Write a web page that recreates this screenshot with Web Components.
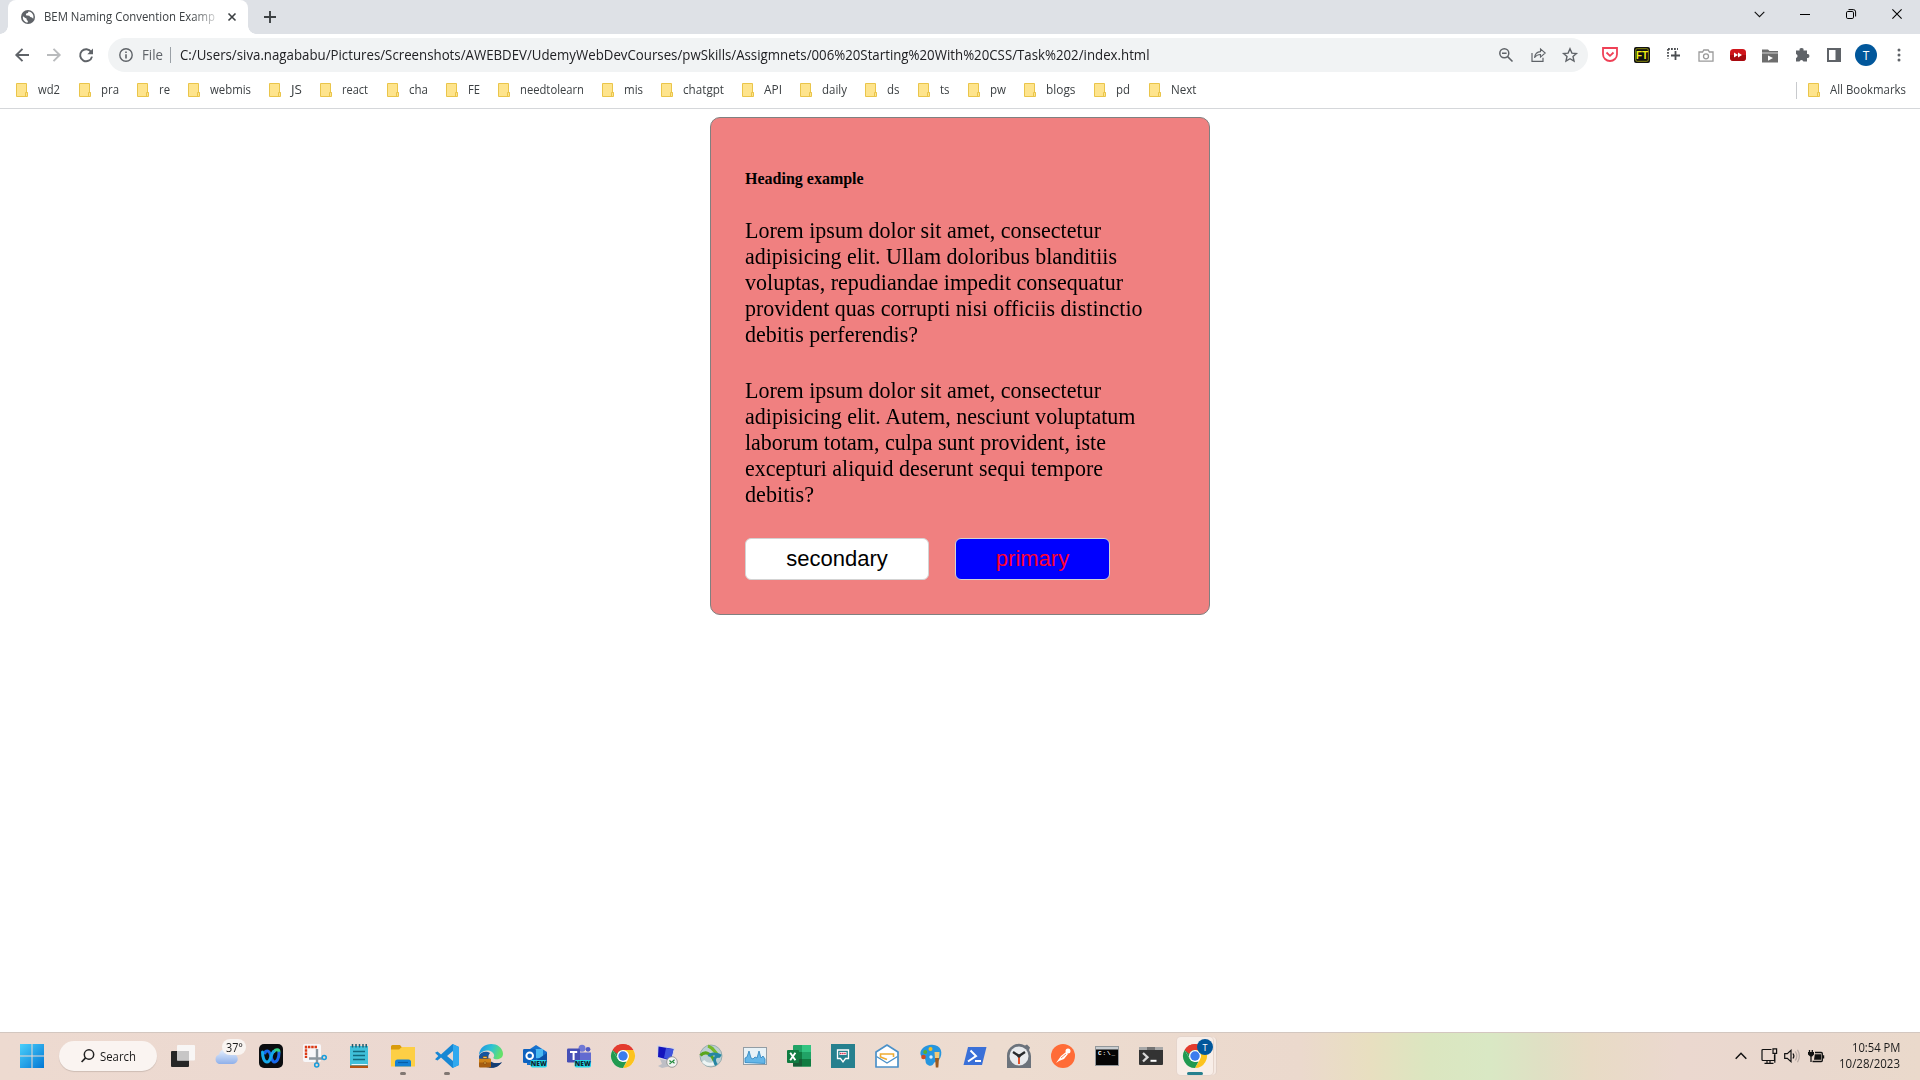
<!DOCTYPE html>
<html lang="en">
<head>
<meta charset="utf-8">
<title>BEM Naming Convention Example</title>
<style>
html,body{margin:0;height:100%;background:#fff;overflow:hidden}
body{font-family:"Open Sans","Noto Sans",sans-serif}
desktop-screen{height:1080px}
</style>
</head>
<body>
<desktop-screen>
  <browser-tabs slot="chrome"></browser-tabs>
  <browser-toolbar slot="chrome"></browser-toolbar>
  <bookmark-bar slot="chrome"></bookmark-bar>
  <bem-card slot="page">
    <span slot="heading">Heading example</span>
    <text-fit w="356">Lorem ipsum dolor sit amet, consectetur</text-fit>
    <text-fit w="372">adipisicing elit. Ullam doloribus blanditiis</text-fit>
    <text-fit w="378">voluptas, repudiandae impedit consequatur</text-fit>
    <text-fit w="397.5">provident quas corrupti nisi officiis distinctio</text-fit>
    <text-fit w="173">debitis perferendis?</text-fit>
    <text-fit slot="second" w="356">Lorem ipsum dolor sit amet, consectetur</text-fit>
    <text-fit slot="second" w="390.5">adipisicing elit. Autem, nesciunt voluptatum</text-fit>
    <text-fit slot="second" w="361">laborum totam, culpa sunt provident, iste</text-fit>
    <text-fit slot="second" w="358">excepturi aliquid deserunt sequi tempore</text-fit>
    <text-fit slot="second" w="69">debitis?</text-fit>
    <bem-button slot="actions" style="width:184px">secondary</bem-button>
    <bem-button slot="actions" kind="primary" style="width:155px">primary</bem-button>
  </bem-card>
  <task-bar slot="taskbar"></task-bar>
</desktop-screen>
<script>
const chromeLogo = `<circle cx="12" cy="12" r="12" fill="#fff"/><path d="M12 12 1.6 6A12 12 0 0 1 22.4 6z" fill="#e33b2e"/><path d="M12 12V6h10.4A12 12 0 0 1 12 24l5.2-9z" fill="#fcc31e"/><path d="M1.6 6l5.2 9L12 18l3.5-.4L12 24A12 12 0 0 1 1.6 6z" fill="#219a50"/><path d="M1.6 6 7 15 12 6z" fill="#219a50"/><path d="M1.6 6A12 12 0 0 1 22.4 6H12a6 6 0 0 0-5.7 4z" fill="#e33b2e"/><circle cx="12" cy="12" r="6" fill="#fff"/><circle cx="12" cy="12" r="4.7" fill="#3b7ded"/>`;
const S = (d, w = 2, c = '#5f6368') => `<path d="${d}" fill="none" stroke="${c}" stroke-width="${w}"/>`;
const newTag = `<rect x="7.5" y="16" width="16.5" height="7.5" rx="2" fill="#25d8e8"/><text x="15.8" y="22.2" font-size="6.6" font-weight="800" text-anchor="middle" fill="#102530">NEW</text>`;
const ICONS = {
  globe: `<circle cx="7" cy="7" r="7" fill="#5f6368"/><path d="M2 6.2 4.3 8l1.2.4.3 1.5 1.1 1.2-.2 1.5C3.500 12.300 1.300 9.500 2 6.200zM7.500 1.600l-.6 1.300-1.700.7-.4 1.600 1.500.4 2 .1 1 1.400 1.700.3 1.200 1.300C13.300 5.300 11 2 7.500 1.600z" fill="#fff"/>`,
  close: S('M1.500 1.500l7 7M8.500 1.500l-7 7', 1.6, '#3c4043'),
  plus: S('M6 0v12M0 6h12', 1.9, '#3c4043'),
  chevDown: S('M.7.8 5.500 5.600 10.300.8', 1.1, '#111'),
  min: S('M0 .5h10', 1, '#000'),
  restore: `<rect x=".5" y="2.500" width="7" height="7" rx="1.300" fill="none" stroke="#000"/>${S('M2.500 .6H7.300a2.300 2.300 0 0 1 2.300 2.300V7.500', 1, '#000')}`,
  winClose: S('M.4.4l9.200 9.200M9.600.4.4 9.600', 1.1, '#000'),
  back: S('M14 7H1.500M7.500.8 1.300 7l6.200 6.200', 1.9),
  fwd: S('M0 7h12.500M6.500.8 12.700 7l-6.200 6.200', 1.9, '#b9bbbd'),
  reload: S('M12.200 4A6 6 0 1 0 13 8.600', 1.9) + `<path d="M14 .4v5.800H8.300z" fill="#5f6368"/>`,
  info: `<circle cx="7" cy="7" r="6.200" fill="none" stroke="#5f6368" stroke-width="1.400"/><path d="M6.200 3.500h1.600v1.600H6.200zM6.200 6.200h1.600v4.300H6.200z" fill="#5f6368"/>`,
  zoomOut: `<circle cx="5.300" cy="5.300" r="4.500" fill="none" stroke="#5f6368" stroke-width="1.500"/>${S('M3 5.300h4.600M8.600 8.600l4.900 4.900', 1.500)}`,
  share: S('M1 5v8.300h11V9.700', 1.200) + S('M3.500 9.800C4 6 6 3.800 9.500 3.600V.9L14.200 5 9.500 9.100V6.500C6.700 6.500 4.900 7.600 3.500 9.800z', 1.100),
  star: S('M7 .8l1.900 4.300 4.500.4-3.400 3 1 4.500L7 10.700 3 13l1-4.500-3.400-3 4.500-.4z', 1.400),
  pocket: S('M1 1h14v6.200a7 6.800 0 0 1-14 0z', 1.800, '#ef4056') + S('M4.500 5.500 8 8.800l3.500-3.300', 1.800, '#ef4056'),
  ft: `<rect width="16" height="16" rx="2" fill="#111"/><rect x="1.700" y="1.700" width="12.600" height="12.600" rx="1.500" fill="none" stroke="#99980e" stroke-width=".9"/><text x="8" y="12" font-weight="bold" font-size="10.500" textLength="12" lengthAdjust="spacingAndGlyphs" text-anchor="middle" fill="#f4f210">FT</text>`,
  capture: `<path d="M1 1h10M1 1v9.500" stroke="#4a4d51" stroke-width="1.800" stroke-dasharray="1.800 1.200" fill="none"/>${S('M8.500 3v9M4 7.500h9', 1.800, '#4a4d51')}`,
  camera: S('M1 3h3.600l1.200-2h4.400l1.200 2H15v9.200H1z', 1.300, '#9a9a9a') + `<circle cx="8" cy="7.300" r="2.500" fill="none" stroke="#9a9a9a" stroke-width="1.300"/>`,
  yt: `<rect y="2" width="16" height="12" rx="3.500" fill="#d0161c"/><path d="M0 8h16v2.500a3.500 3.500 0 0 1-3.500 3.500h-9A3.500 3.500 0 0 1 0 10.500z" fill="#a70b10"/><path d="M4 5.500l4 2.500-4 2.500zM8 5.500l4 2.500-4 2.500z" fill="#fff"/>`,
  folderPlay: `<path d="M0 1.500h6l1.500 1.500H16V5H0z" fill="#6d6d6d"/><path d="M0 4h16v2H0z" fill="#a0a0a0"/><path d="M0 6h16v8.500H0z" fill="#6d6d6d"/><path d="M6 7.500l5 2.600-5 2.600z" fill="#fff"/>`,
  puzzle: `<path d="M1 3.500h3.600a2 2 0 1 1 3.900 0H12v3.600a2 2 0 1 1 0 3.900v3.500H8.400a2 2 0 0 0-3.900 0H1v-3.600a2 2 0 0 0 0-3.900z" fill="#5f6368"/>`,
  side: `<path d="M0 0h14v14H0zM2 2v10h6.500V2z" fill="#5f6368" fill-rule="evenodd"/>`,
  dots: `<g fill="#5f6368"><circle cx="2" cy="2" r="1.500"/><circle cx="2" cy="7" r="1.500"/><circle cx="2" cy="12" r="1.500"/></g>`,
  folder: `<path d="M.5.500H10.500V9.500h1v4H.5z" fill="#fee48d" stroke="#eac54a"/><path d="M9.500 13.500v-4h2" fill="none" stroke="#eac54a"/>`,
  win: `<defs><linearGradient id="a" gradientUnits="userSpaceOnUse" x1="0" y1="0" x2="24" y2="24"><stop stop-color="#4bd0fb"/><stop offset="1" stop-color="#0277d4"/></linearGradient></defs><path d="M0 0h11.500v11.500H0zM12.500 0H24v11.500H12.500zM0 12.500h11.500V24H0zM12.500 12.500H24V24H12.500z" fill="url(#a)"/>`,
  search: `<circle cx="8" cy="5.500" r="4.700" fill="none" stroke="#222" stroke-width="1.500"/>${S('M4.600 8.800.6 13', 1.700, '#222')}`,
  taskview: `<rect y="7" width="18" height="16" rx="1" fill="#262626"/><rect x="6" y="1" width="18" height="15.500" rx="1" fill="#f8f6f5"/><rect x="6" y="7" width="12" height="9.500" fill="#c7c6c6"/>`,
  cloud: `<defs><linearGradient id="a" x2="0" y2="1"><stop stop-color="#e8f0fc"/><stop offset="1" stop-color="#8fb0ea"/></linearGradient></defs><path d="M5 20a5 5 0 0 1 0-9.500A7 7 0 0 1 18.500 10 5 5 0 0 1 19 20z" fill="url(#a)"/>`,
  webex: `<rect width="24" height="24" rx="5" fill="#0b0d10"/><g fill="none" stroke-width="3" stroke-linecap="round"><path d="M15 7.500c2-2.500 5-2.200 5 .5" stroke="#35cf86"/><path d="M20 9c0 5-2 9-4.500 9-4 0-3-11-7-11-1.500 0-2.500 1-2.500 2" stroke="#1668ec"/><path d="M3.500 8c0 5 1.500 10 4.500 10 4 0 3.500-7.500 6.500-10.500" stroke="#15a9ea"/></g>`,
  snip: `<rect width="18" height="18" rx="2" fill="#f7f7f9"/><path d="M14 3H3v11" fill="none" stroke="#dc3b16" stroke-width="2.400" stroke-dasharray="2.500 .8"/><path d="M14 5v14M6 14.500h13" stroke="#8c979f" stroke-width="2.400"/><circle cx="13.700" cy="21" r="2" fill="none" stroke="#189ddc" stroke-width="1.600"/><circle cx="21.200" cy="13.500" r="2" fill="none" stroke="#189ddc" stroke-width="1.600"/>`,
  notepad: `<path d="M3 2h18v20H3z" fill="#40c0da"/><path d="M3 21.500h18V24H3z" fill="#b65513"/><path d="M4.500 20.500h16" stroke="#e9f7fa"/><path d="M5.500 0v3.500M9 0v3.500M12.500 0v3.500M16 0v3.500M19.200 0v3.500" stroke="#205d70" stroke-width="1.500"/><path d="M6 7.500h12M6 11.500h12M6 15.500h12" stroke="#12697e" stroke-width="1.500"/>`,
  explorer: `<path d="M0 2.500Q0 1 1.500 1H9l2 2.500h11q2 0 2 1.500v6H0z" fill="#d99b0c"/><path d="M0 5.500h8l3-2.500h13v19.500H0z" fill="#fdcf45"/><path d="M4 22.500V18q0-2.500 2.500-2.500h11Q20 15.500 20 18v4.500z" fill="#1381d5"/><path d="M7 18.500h10" stroke="#075da6" stroke-width="1.200"/>`,
  vscode: `<path d="M17.500 0 24 3v18l-6.500 3L6 13.500 2.500 16.500 0 15.200 3.300 12 0 8.800 2.500 7.500 6 10.500zM18 7l-6 5 6 5z" fill="#1787d4" fill-rule="evenodd"/><path d="M18 .2 24 3v18l-6 2.800z" fill="#30a9ef"/>`,
  edge: `<defs><linearGradient id="a" x2="1" y2=".3"><stop stop-color="#1d8de4"/><stop offset=".55" stop-color="#2fc3d3"/><stop offset="1" stop-color="#64e06a"/></linearGradient></defs><path d="M0 12c2-5 8-5 11-3-3 3-2 9 4 10h7c-4 5-12 6-17 3-4-2-5-6-5-10z" fill="#16549e"/><path d="M10 13c0 6 8 8 13 5-3 5-8 6.500-13 5.500z" fill="#123c72"/><path d="M0 11C.5-3.500 23-3.500 24 9.500c.2 6-7.500 7-9.500 4.800-.6-1 1-1.300.6-3.300C14.500 8 11 6.200 7.500 6.500 4 7 1.500 8.500 0 11z" fill="url(#a)"/><rect y="14.500" width="12" height="9" rx="1" fill="#a65d10"/><path d="M0 15h12v3.500H0z" fill="#cf8318"/><path d="M4 14v-1.500h4V14M5 18h2v2H5z" fill="#f3c252" stroke="#7d430b" stroke-width=".6"/>`,
  outlook: `<path d="M4 7 13 1l11 7v13H4z" fill="#1672cf"/><path d="M7 5h13v9H7z" fill="#48b8f2"/><path d="M6 21 24 9v12z" fill="#0c50a5"/><rect y="5" width="13" height="14" rx="1.300" fill="#0e62bf"/><circle cx="6.700" cy="11.800" r="3.300" fill="none" stroke="#fff" stroke-width="2"/>${newTag}`,
  teams: `<circle cx="15" cy="4.200" r="3.500" fill="#7078d5"/><circle cx="21" cy="5.300" r="2.400" fill="#505ac5"/><path d="M11 8.500h13v8q-2 4-6 4h-7z" fill="#626bd0"/><rect y="4.500" width="13" height="14" rx="1.300" fill="#464fb6"/><path d="M3 8h7.200M6.600 8v8" stroke="#fff" stroke-width="2"/>${newTag}`,
  chrome: chromeLogo,
  rdp: `<path d="M5 15l8 1-1 5 4 1-9 2-4-2 4-2z" fill="#bdbec5"/><path d="M2 1l18 3-3 14-15-4z" fill="#d6d7e2"/><path d="M3.500 2.500 18.500 5l-2.800 11.500L3 13z" fill="#1414bd"/><path d="M11 4l7.500 1.200-2.800 11L9 14z" fill="#3f54de"/><circle cx="17" cy="18" r="5.300" fill="#f1f2f0" stroke="#8a8a8a" stroke-width=".8"/><path d="M14.500 16.500l2 1.800-2 1.700M19.500 15.800l-2 1.800 2 1.700" fill="none" stroke="#218b3c" stroke-width="1.200"/>`,
  anyconnect: `<circle cx="12" cy="12" r="11" fill="#bccfd3" stroke="#8da2a3" stroke-width=".8"/><path d="M4 17c3 3.500 7 4 11 2.500" fill="none" stroke="#eef5f4" stroke-width="3"/><path d="M1.500 11.500C6 6.500 12 9 15 16.500" fill="none" stroke="#58a51c" stroke-width="3"/><path d="M9 2c5 1.500 6 5 9 8" fill="none" stroke="#75b82a" stroke-width="3"/><path d="M22 12c-6-3.500-11-2-12 .5M21 12.500c-5-1.500-7.500 3-3.500 8.500" fill="none" stroke="#2586a2" stroke-width="3"/>`,
  perf: `<rect x=".5" y="3.500" width="23" height="17" fill="#e8f2f7" stroke="#929da5"/><path d="M2 18.500V14l2-1 2-6 2 7 2 1 2-2 2 1 2-7 2 7 2-2 2 3v4.500z" fill="#64b6e8" stroke="#2d83bd" stroke-width=".8"/>`,
  excel: `<rect x="6" y="1" width="18" height="21.500" rx="1" fill="#21a366"/><path d="M15 1h9v7h-9z" fill="#33c481"/><path d="M6 8h9v7H6zM15 15h9v7.500h-9z" fill="#107c41"/><path d="M6 15h9v7.500H6z" fill="#185c37"/><rect y="6" width="12" height="13" rx="1" fill="#107c41"/>${S('M3.200 8.700l5.200 7.600M8.400 8.700l-5.200 7.600', 1.900, '#fff')}`,
  chat: `<rect width="24" height="24" fill="#26808e"/><path d="M6.500 6h11v8.500h-3L12 18l-2.500-3.500h-3z" fill="none" stroke="#fff" stroke-width="1.300"/><path d="M8.500 8h7v3h-7z" fill="#fff"/><path d="M9 9.500h6" stroke="#d52e4f" stroke-width="1.600" stroke-dasharray="1.500 .6"/>`,
  mail: `<path d="M1 8 12 1l11 7v15H1z" fill="#fff" stroke="#4b91c9" stroke-width="1.700" stroke-linejoin="round"/><path d="M1.500 12.500 12 19l10.500-6.500" fill="none" stroke="#4b91c9" stroke-width="1.300"/><path d="M12 15.500 5.500 13V10h13v3" fill="none" stroke="#eeac32" stroke-width="1.600"/>`,
  paint: `<path d="M12 .8C22 0 25 9 20 16c-2 2-4 1-5 3s-3 4-6 2c-4-2-1-5-4-7C-2 11 2 1.500 12 .800z" fill="#2696df"/><circle cx="11.500" cy="5" r="2" fill="#f4bf22"/><circle cx="6.200" cy="8" r="2" fill="#5aae2e"/><circle cx="4.500" cy="13" r="2.300" fill="#d04a20"/><circle cx="12" cy="13" r="1.700" fill="#dceef9"/><path d="M15.500 8h5l-.5 7h-4z" fill="#f0c878"/><path d="M16 14h4l-.7 9.500h-2.500z" fill="#9c5b20"/>`,
  powershell: `<path d="M5 3h18.500L19 21H.5z" fill="#3a70d8"/>${S('M7.500 6.500l5.500 5.500-8 5.500M12 17h6', 2, '#fff')}`,
  clock: `<path d="M0 12A12 12 0 0 1 18 1.500l2-1 3 3-1 2.500A12 12 0 0 1 24 12v12H0z" fill="#6c737c"/><circle cx="12" cy="12" r="9.500" fill="#e8eaed"/>${S('M6 8l6 4 6-4', 2.300, '#27292c')}<path d="M12 12v8" stroke="#e6532b" stroke-width="2"/><circle cx="12" cy="12" r="1.700" fill="#27292c"/>`,
  postman: `<circle cx="12" cy="12" r="12" fill="#ff6c37"/><path d="M5 19l5-7 5-4 2 2-4 5-5 2z" fill="#fff"/><circle cx="17" cy="7" r="2.500" fill="#fff"/><path d="M10 14l5-4" stroke="#ff6c37" stroke-width=".8"/>`,
  cmd: `<rect x=".5" y="2.500" width="23" height="19" fill="#050505" stroke="#92979a"/><path d="M1 3h22v2.500H1z" fill="#c9cdd0"/><text x="3" y="11.200" font-weight="bold" font-size="6" fill="#fff" textLength="17">C:\\_</text>`,
  terminal: `<rect y="3" width="24" height="18" rx="1" fill="#333"/><path d="M0 3h24v3H0z" fill="#a8a8a8"/><path d="M8 3h8v3H8z" fill="#737373"/>${S('M4 9l4.500 4.200L4 17.500', 2.300, '#d9d9d9')}${S('M11.500 16.800h6', 2, '#fff')}`,
  chevUp: S('M.7 6.800 6 1.300l5.300 5.500', 1.500, '#111'),
  network: S('M10.500 1.500H2q-1 0-1 1v9q0 1 1 1h11.500V7M6 12.500V15M9 12.500V15M3.500 15.300h9', 1.200, '#111') + S('M12 .800h3.600v4.500H12zM13.800 5.300v9.500', 1.200, '#111'),
  volume: S('M.7 4.700h2.600L7 1.300v11.400L3.300 9.300H.7z', 1.200, '#111') + S('M9 4.500q1.800 2.500 0 5', 1.200, '#111') + S('M11.300 2.500q3 4.500 0 9M13.500.800q3.700 6.200 0 12.400', 1.200, '#b7aaa4'),
  battery: `<path d="M6.800 4.200h6.400v5.600H6zM14.500 5.200h1.700v3.400h-1.700zM0 2h6v2.500L4.200 6.500h-2L0 4.500z" fill="#111"/>${S('M7 2.500h6.300q1 0 1 1v7q0 1-1 1H4.500M1.500 0v2.500M4.300 0v2.500M3 6v6', 1.300, '#111')}`
};
function define(name, markup, after) {
  const t = document.createElement('template');
  t.innerHTML = markup;
  customElements.define(name, class extends HTMLElement {
    connectedCallback() {
      if (this.shadowRoot) return;
      const r = this.attachShadow({ mode: 'open' });
      r.append(t.content.cloneNode(true));
      if (after) after(this, r);
    }
  });
}
define('ui-icon', `<style>:host{display:block;flex:none}svg{display:block;overflow:visible;width:100%;height:100%}text{font-family:"Open Sans",sans-serif}:host([name=ft]) text{font-family:"Liberation Sans"}:host([name=cmd]) text{font-family:"Liberation Mono"}</style><svg></svg>`, (el, r) => {
  const w = el.getAttribute('w') || 24, h = el.getAttribute('h') || w;
  el.style.width = w + 'px'; el.style.height = h + 'px';
  const s = r.querySelector('svg');
  s.setAttribute('viewBox', `0 0 ${w} ${h}`);
  s.innerHTML = ICONS[el.getAttribute('name')];
});
define('desktop-screen', `<style>:host{display:flex;flex-direction:column;background:#fff}main{flex:1;padding-top:8px}</style><header><slot name="chrome"></slot></header><main><slot name="page"></slot></main><slot name="taskbar"></slot>`);
define('browser-tabs', `<style>
:host{display:flex;height:34px;background:#dee1e6;box-sizing:border-box;padding-left:8px}
.tab{width:240px;box-sizing:border-box;background:#fff;border-radius:8px 8px 0 0;display:flex;align-items:center;padding:0 11px 0 13px;position:relative}
.tab::before,.tab::after{content:"";position:absolute;bottom:0;width:8px;height:8px}
.tab::before{left:-8px;background:radial-gradient(circle at 0 0,#dee1e6 7.5px,#fff 8px)}
.tab::after{right:-8px;background:radial-gradient(circle at 100% 0,#dee1e6 7.5px,#fff 8px)}
.title{width:172px;margin:-1px 12px 1px 9px;font-size:12px;color:#3c4043;-webkit-mask:linear-gradient(90deg,#000 148px,#0003 172px)}
.plus{margin:11px 0 0 16px}.ctl{margin-left:auto;display:flex;align-items:center;height:28px;padding-right:18px}
</style><div class="tab"><ui-icon name="globe" w="14"></ui-icon><div class="title"><text-fit w="171">BEM Naming Convention Examp</text-fit></div><ui-icon name="close" w="10"></ui-icon></div><ui-icon class="plus" name="plus" w="12"></ui-icon>
<div class="ctl"><ui-icon name="chevDown" w="11" h="6"></ui-icon><ui-icon name="min" w="10" h="1" style="margin-left:35px"></ui-icon><ui-icon name="restore" w="10" style="margin-left:36px"></ui-icon><ui-icon name="winClose" w="10" style="margin-left:36px"></ui-icon></div>`);
define('browser-toolbar', `<style>
:host{display:flex;align-items:center;height:42px;box-sizing:border-box;padding:0 19px 0 15px;font-size:14px}
.box{width:1480px;height:34px;border-radius:17px;background:#f1f3f4;box-sizing:border-box;display:flex;align-items:center;padding:0 11px 0 11px;margin-left:15px}
.file{color:#5f6368;margin-left:9px}.sep{width:1px;height:16px;background:#9aa0a6;margin:0 9px 0 7px}.url{color:#202124}.file,.url{margin-top:-1px}
.av{width:22px;height:22px;border-radius:50%;background:#01579b;color:#fff;font-size:12px;display:flex;align-items:center;justify-content:center;margin:0 20px 0 14px}
.ext{display:flex;align-items:center;gap:16px;margin-left:14px}
</style><ui-icon name="back" w="14"></ui-icon><ui-icon name="fwd" w="14" style="margin-left:18px"></ui-icon><ui-icon name="reload" w="14" style="margin-left:18px"></ui-icon>
<div class="box"><ui-icon name="info" w="14"></ui-icon><text-fit class="file" w="21">File</text-fit><i class="sep"></i><text-fit class="url" w="969.500">C:/Users/siva.nagababu/Pictures/Screenshots/AWEBDEV/UdemyWebDevCourses/pwSkills/Assigmnets/006%20Starting%20With%20CSS/Task%202/index.html</text-fit>
<ui-icon name="zoomOut" w="14" style="margin-left:auto"></ui-icon><ui-icon name="share" w="15" h="14" style="margin-left:18px"></ui-icon><ui-icon name="star" w="14" style="margin-left:17px"></ui-icon></div>
<div class="ext"><ui-icon name="pocket" w="16"></ui-icon><ui-icon name="ft" w="16"></ui-icon><ui-icon name="capture" w="16" style="position:relative;left:1px;top:1px"></ui-icon><ui-icon name="camera" w="16" h="13"></ui-icon><ui-icon name="yt" w="16"></ui-icon><ui-icon name="folderPlay" w="16" h="15"></ui-icon><ui-icon name="puzzle" w="16" style="position:relative;left:1px"></ui-icon><ui-icon name="side" w="14" style="margin-left:1px"></ui-icon></div><div class="av">T</div><ui-icon name="dots" w="4" h="14"></ui-icon>`);
define('bookmark-bar', `<style>
:host{display:flex;align-items:center;height:33px;box-sizing:border-box;border-bottom:1px solid #d5d7da;padding:0 14px 4px 16px;font-size:12px;color:#3c4043}
.b{display:flex;align-items:center;gap:10px;height:17px}.all{margin-left:auto;border-left:1px solid #c8cacd;padding-left:11px}text-fit{margin-top:-1px}
</style>`, (el, r) => {
  const a = [['wd2',16,22],['pra',79,18],['re',137,11],['webmis',188,41],['JS',269,11],['react',320,26],['cha',387,19],['FE',446,12],['needtolearn',498,64],['mis',602,19],['chatgpt',661,41],['API',742,18],['daily',800,25],['ds',865,12.5],['ts',918,9.5],['pw',968,16],['blogs',1024,29.5],['pd',1094,14],['Next',1149,25.5]];
  a.forEach(([t, x, w], i) => {
    const d = document.createElement('div'); d.className = 'b';
    if (a[i + 1]) d.style.width = a[i + 1][1] - x + 'px';
    d.innerHTML = `<ui-icon name="folder" w="12" h="14"></ui-icon><text-fit w="${w}">${t}</text-fit>`;
    r.append(d);
  });
  const d = document.createElement('div'); d.className = 'b all';
  d.innerHTML = '<ui-icon name="folder" w="12" h="14"></ui-icon><text-fit w="76">All Bookmarks</text-fit>';
  r.append(d);
});
define('bem-card', `<style>
:host{display:block;width:500px;height:498px;box-sizing:border-box;margin:0 auto;border:1px solid gray;border-radius:10px;background:#f08080;padding:50px 34px 0;font-family:"Liberation Serif",serif;color:#000}
h5{margin:0;font-size:16px;line-height:22px}p{margin:0;font-size:22.400px;line-height:26px}
.one{margin-top:28px}.two{margin-top:30px}.act{display:flex;gap:26px;margin-top:30px}
</style><h5><slot name="heading"></slot></h5><p class="one"><slot></slot></p><p class="two"><slot name="second"></slot></p><div class="act"><slot name="actions"></slot></div>`);
define('bem-button', `<style>
:host{display:flex;align-items:center;justify-content:center;height:42px;box-sizing:border-box;border:1px solid #d3d3d3;border-radius:6px;background:#fff;color:#000;font:22px "Liberation Sans",sans-serif}
:host([kind=primary]){background:#00f;color:#ff0030}
span{line-height:25px;margin-top:-1px}</style><span><slot></slot></span>`);
define('task-bar', `<style>
:host{display:flex;align-items:center;height:48px;box-sizing:border-box;border-top:1px solid #d3c7c0;padding:0 20px 0 20px;color:#1b1b1b;font-size:12px;
background:linear-gradient(90deg,#eddad0 0,#ebd8d1 500px,#eddcd0 1000px,#ebd9cd 1300px,#e8dfc0 1370px,#dbe6c0 1430px,#d9e8c4 1490px,#dfe0c4 1540px,#e8dbc5 1590px,#ebd8cf 1680px,#e9d8ce 1800px,#ead9cb 1920px)}
.pill{width:98px;height:30px;border-radius:15px;background:#faf4f1;display:flex;align-items:center;gap:5px;box-sizing:border-box;padding-left:22px;margin:-1px 14px 0 15px;box-shadow:0 1px 1px #0002}
.apps{display:flex;align-items:center;height:47px}.app{width:44px;height:46px;margin-bottom:1px;display:flex;align-items:center;justify-content:center;position:relative}
.dot::after{content:"";position:absolute;bottom:4px;width:6px;height:3px;border-radius:2px;background:#817772}
.deg{position:absolute;left:17px;top:6px;width:24px;height:16px;border-radius:8px;background:#f9f4f1;display:flex;align-items:center;justify-content:center}
.on{width:36px;height:38px;border-radius:4px;background:#f8eee8;box-shadow:0 0 0 1px #e5d5cc,3px 0 0 0 #f5e9e2,4px 0 0 0 #e1d1c8;margin-left:4px}
.on::after{content:"";position:absolute;bottom:0;width:16px;height:3px;border-radius:2px;background:#26808e}
.av{position:absolute;left:20px;top:2px;width:16px;height:16px;border-radius:50%;background:#01579b;color:#fff;font-size:9px;display:flex;align-items:center;justify-content:center}
.tray{display:flex;align-items:center;margin-left:auto;height:46px;margin-bottom:1px}
.time{display:flex;flex-direction:column;align-items:flex-end;line-height:16px;margin-left:15px}
</style><ui-icon name="win" w="24" style="margin-bottom:1px"></ui-icon><div class="pill"><ui-icon name="search" w="14"></ui-icon><text-fit w="36">Search</text-fit></div><div class="apps"></div>
<div class="tray"><ui-icon name="chevUp" w="12" h="8"></ui-icon><ui-icon name="network" w="16" style="margin-left:14px"></ui-icon><ui-icon name="volume" w="16" h="14" style="margin-left:7px"></ui-icon><ui-icon name="battery" w="16" h="13" style="margin-left:8px"></ui-icon><div class="time"><text-fit w="48.5">10:54 PM</text-fit><text-fit w="61">10/28/2023</text-fit></div></div>`, (el, r) => {
  const apps = 'taskview cloud webex snip notepad explorer vscode edge outlook teams chrome rdp anyconnect perf excel chat mail paint powershell clock postman cmd terminal'.split(' ');
  r.querySelector('.apps').innerHTML = apps.map(n => `<div class="app ${n === 'explorer' || n === 'vscode' ? 'dot' : ''}" ${n==='taskview'?'style="margin-left:-10px"':''}><ui-icon name="${n}" ${n==='cloud'?'style="margin-left:-2px"':''}></ui-icon>${n === 'cloud' ? '<div class="deg"><text-fit w="17">37°</text-fit></div>' : ''}</div>`).join('') + '<div class="app on"><ui-icon name="chrome"></ui-icon><div class="av">T</div></div>';
});
/* Sets its text to an exact advance width. Registered last, so that its hosts' styles are in place when it measures. */
define('text-fit', `<style>:host{display:block;white-space:nowrap;flex:none}span{display:inline-block;transform-origin:0 50%}</style><span><slot></slot></span>`, (el, r) => {
  const s = r.querySelector('span'), w = +el.getAttribute('w');
  const n = s.getBoundingClientRect().width || w;
  el.style.width = w + 'px';
  s.style.transform = `scaleX(${w / n})`;
});
</script>
</body>
</html>
